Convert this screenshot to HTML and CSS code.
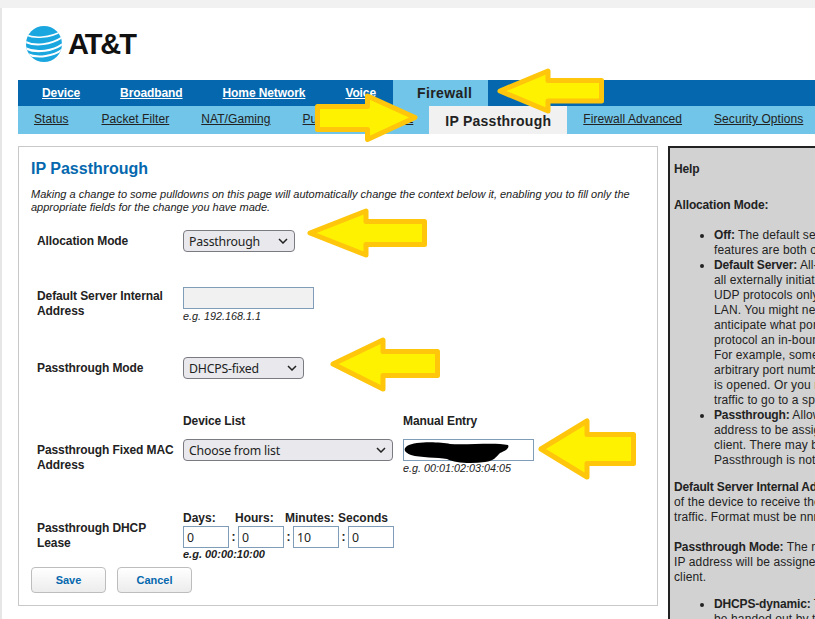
FILE: index.html
```html
<!DOCTYPE html>
<html lang="en">
<head>
<meta charset="utf-8">
<title>IP Passthrough</title>
<link rel="stylesheet" href="styles.css">
</head>
<body>
<div class="page">
  <header class="brand">
    <svg class="globe" width="36" height="36" viewBox="0 0 36 36" aria-hidden="true">
      <defs><clipPath id="ball"><circle cx="18" cy="18" r="18"/></clipPath></defs>
      <circle cx="18" cy="18" r="18" fill="#1aa7e0"/>
      <g clip-path="url(#ball)" fill="none" stroke="#fff" stroke-linecap="round">
        <path d="M-1 8.5C8 13 24 12 36 5" stroke-width="1.6"/>
        <path d="M-2 15C8 21 26 19 38 10" stroke-width="2"/>
        <path d="M-1 22C10 28 28 25 38 17" stroke-width="2.2"/>
        <path d="M1 28C12 33 28 30 37 23" stroke-width="2.2"/>
      </g>
    </svg>
    <span class="wordmark">AT&amp;T</span>
  </header>

  <nav class="nav-main">
    <a href="#">Device</a>
    <a href="#">Broadband</a>
    <a href="#">Home Network</a>
    <a href="#">Voice</a>
    <span class="nav-main-active">Firewall</span>
  </nav>
  <nav class="nav-sub">
    <a href="#">Status</a>
    <a href="#">Packet Filter</a>
    <a href="#">NAT/Gaming</a>
    <a href="#">Public Subnets/DMZ</a>
    <span class="nav-sub-active">IP Passthrough</span>
    <a href="#">Firewall Advanced</a>
    <a href="#">Security Options</a>
  </nav>

  <main class="content">
    <section class="panel">
      <h1 class="title">IP Passthrough</h1>
      <p class="intro">Making a change to some pulldowns on this page will automatically change the context below it, enabling you to fill only the appropriate fields for the change you have made.</p>

      <div class="row row-alloc">
        <div class="label">Allocation Mode</div>
        <select class="sel sel-alloc"><option>Passthrough</option></select>
      </div>

      <div class="row row-server">
        <div class="label">Default Server Internal Address</div>
        <div>
          <input class="txt txt-disabled" type="text" disabled>
          <div class="hint">e.g. 192.168.1.1</div>
        </div>
      </div>

      <div class="row row-mode">
        <div class="label">Passthrough Mode</div>
        <select class="sel sel-mode"><option>DHCPS-fixed</option></select>
      </div>

      <div class="row row-mac">
        <div class="label label-mac">Passthrough Fixed MAC Address</div>
        <div class="mac-col">
          <div class="head">Device List</div>
          <select class="sel sel-device"><option>Choose from list</option></select>
        </div>
        <div class="mac-col">
          <div class="head">Manual Entry</div>
          <input class="txt" type="text">
          <div class="hint">e.g. 00:01:02:03:04:05</div>
        </div>
      </div>

      <div class="row row-lease">
        <div class="label label-lease">Passthrough DHCP Lease</div>
        <div>
          <div class="lease-heads">
            <span class="lh-days">Days:</span><span class="lh-hours">Hours:</span><span class="lh-min">Minutes:</span><span>Seconds</span>
          </div>
          <div class="lease-inputs">
            <input class="txt txt-lease" type="text" value="0"><span class="colon">:</span>
            <input class="txt txt-lease" type="text" value="0"><span class="colon">:</span>
            <input class="txt txt-lease" type="text" value="10"><span class="colon">:</span>
            <input class="txt txt-lease" type="text" value="0">
          </div>
          <div class="hint hint-bold">e.g. 00:00:10:00</div>
        </div>
      </div>

      <div class="actions">
        <button class="btn" type="button">Save</button>
        <button class="btn" type="button">Cancel</button>
      </div>
    </section>

    <aside class="help">
      <p class="help-head"><b>Help</b></p>
      <p><b>Allocation Mode:</b></p>
      <ul>
        <li><b>Off:</b> The default setting. IP Passthrough and Default Server<br>features are both off.</li>
        <li><b>Default Server:</b> All-ports forwarding. The device forwards<br>all externally initiated traffic for the TCP and<br>UDP protocols only to one device on the<br>LAN. You might need this if you cannot<br>anticipate what ports an application needs, or<br>protocol an in-bound connection requires.<br>For example, some applications select an<br>arbitrary port number when a connection<br>is opened. Or you might simply want all<br>traffic to go to a specific device.</li>
        <li><b>Passthrough:</b> Allows the router's public IP<br>address to be assigned to a single LAN<br>client. There may be limitations.<br>Passthrough is not always needed.</li>
      </ul>
      <p><b>Default Server Internal Address:</b> The address<br>of the device to receive the forwarded<br>traffic. Format must be nnn.nnn.nnn.nnn.</p>
      <p><b>Passthrough Mode:</b> The mode by which the public<br>IP address will be assigned to the LAN<br>client.</p>
      <ul class="help-last">
        <li><b>DHCPS-dynamic:</b> The public IP address will<br>be handed out by the DHCP server.</li>
      </ul>
    </aside>
  </main>
</div>

<svg class="marks" width="815" height="619" viewBox="0 0 815 619" aria-hidden="true">
  <path class="scribble" d="M407 446C416 441 440 442 450 444C470 445 495 442 508 445C510 448 505 451 500 453C496 457 494 461 485 462C470 464 455 463 447 459C438 457 420 458 411 455C404 452 403 449 407 446Z"/>
  <g class="arrow">
    <polygon points="500,91 548,71 548,80.5 601.5,80.5 601.5,101 548,101 548,111"/>
    <polygon points="317.5,106.5 367.5,106.5 367.5,96 415,117.5 367.5,139.5 367.5,129.5 317.5,129.5"/>
    <polygon points="310,233 366,211 366,221.5 424.5,221.5 424.5,244.5 366,244.5 366,255"/>
    <polygon points="333,364 383,340 383,351.5 437.5,351.5 437.5,375.5 383,375.5 383,389"/>
    <polygon points="541,449 587,421 587,434.5 633.5,434.5 633.5,463.5 587,463.5 587,477"/>
  </g>
</svg>
</body>
</html>
```
FILE: styles.css
```css
* { box-sizing: border-box; }
html, body { margin: 0; height: 100%; }
body {
  position: relative;
  width: 815px;
  height: 619px;
  overflow: hidden;
  background: #f1f1f1;
  font-family: "Liberation Sans", Arial, sans-serif;
  font-size: 12px;
  color: #222;
}
.page {
  margin-top: 8px;
  height: 611px;
  padding-left: 16px;
  border-left: 2px solid #e6e6e6;
  background: #fff;
  overflow: hidden;
}
.brand {
  display: flex;
  align-items: center;
  height: 72px;
  padding: 0 0 0 8px;
  gap: 6px;
}
.globe { flex: none; }
.wordmark {
  font-size: 29px;
  font-weight: 700;
  letter-spacing: -2.1px;
  color: #111;
}
.nav-main {
  display: flex;
  height: 26px;
  padding-left: 4px;
  background: #0568ae;
  align-items: stretch;
}
.nav-main a {
  display: flex;
  align-items: center;
  padding: 0 20px;
  color: #fff;
  font-weight: 700;
  letter-spacing: -0.1px;
  text-decoration: underline;
}
.nav-main-active {
  display: flex;
  align-items: center;
  margin-left: -3px;
  padding: 0 16px 0 24px;
  background: #71c5e8;
  font-size: 14px;
  letter-spacing: 0.4px;
  font-weight: 700;
  color: #222;
  white-space: nowrap;
}
.nav-sub {
  display: flex;
  height: 28px;
  background: #71c5e8;
}
.nav-sub a {
  display: flex;
  align-items: center;
  padding: 0 16px 2px;
  color: #222;
  letter-spacing: 0.08px;
  text-decoration: underline;
  white-space: nowrap;
}
.nav-sub a:first-child { padding-right: 17px; }
.nav-sub-active {
  display: flex;
  align-items: center;
  padding: 2px 16px 0;
  background: #f1f1f1;
  font-size: 14px;
  letter-spacing: 0.25px;
  font-weight: 700;
  color: #222;
  white-space: nowrap;
}
.content {
  display: flex;
  gap: 10px;
  margin-top: 12px;
}
.panel {
  flex: none;
  width: 640px;
  height: 460px;
  padding: 12px 12px 0 12px;
  border: 1px solid #c8c8c8;
  background: #fff;
}
.title {
  margin: 0;
  font-size: 16px;
  line-height: 20px;
  font-weight: 700;
  color: #0568ae;
}
.intro {
  margin: 9px 0 0;
  font-size: 11px;
  line-height: 13px;
  font-style: italic;
  color: #222;
}
.row { display: flex; align-items: flex-start; padding-left: 6px; }
.label {
  flex: none;
  width: 146px;
  padding-right: 4px;
  font-weight: 700;
  letter-spacing: -0.1px;
  line-height: 15px;
}
.row-alloc { margin-top: 16px; align-items: center; }
.row-server { margin-top: 35px; }
.row-server .label { margin-top: 2px; }
.row-mode { margin-top: 34px; align-items: center; }
.row-mac { margin-top: 35px; }
.label-mac { margin-top: 29px; }
.row-lease { margin-top: 36px; }
.label-lease { margin-top: 10px; }
.sel {
  display: block;
  height: 22px;
  padding: 0 0 0 5px;
  appearance: none;
  -webkit-appearance: none;
  border: 1px solid #7a7a82;
  border-radius: 4px;
  background: #e9e9ed url("data:image/svg+xml,%3Csvg xmlns='http://www.w3.org/2000/svg' width='10' height='6'%3E%3Cpath d='M1 1l4 4 4-4' fill='none' stroke='%23222' stroke-width='1.5'/%3E%3C/svg%3E") no-repeat right 6px center;
  font-family: "Noto Sans", "Open Sans", sans-serif;
  font-size: 12.3px;
  letter-spacing: -0.2px;
  color: #222;
}
.sel-alloc { width: 112px; }
.sel-mode { width: 121px; }
.sel-device { width: 210px; }
.txt {
  display: block;
  width: 131px;
  height: 22px;
  padding: 0 3px;
  border: 1px solid #7f9db9;
  border-radius: 0;
  background: #fff;
  font-family: "Noto Sans", "Open Sans", sans-serif;
  font-size: 12.3px;
  color: #222;
}
.txt-disabled { background: #f1f1f1; }
.hint {
  margin-top: 1px;
  font-size: 10.8px;
  line-height: 13px;
  font-style: italic;
}
.hint-bold { font-size: 11px; font-weight: 700; margin-top: 0; }
.mac-col { margin-right: 10px; }
.head { font-weight: 700; letter-spacing: -0.1px; line-height: 15px; margin-bottom: 10px; }
.lease-heads { display: flex; font-weight: 700; line-height: 15px; }
.lh-days { width: 52px; }
.lh-hours { width: 50px; }
.lh-min { width: 53px; }
.lease-inputs { display: flex; align-items: center; }
.txt-lease { width: 46px; }
.colon { width: 9px; text-align: center; font-weight: 700; }
.actions { display: flex; gap: 11px; margin-top: 6px; }
.btn {
  width: 75px;
  height: 26px;
  padding: 0;
  border: 1px solid #bdbdbd;
  border-radius: 4px;
  background: linear-gradient(#fff, #ececec);
  font-family: "Liberation Sans", Arial, sans-serif;
  font-size: 11px;
  font-weight: 700;
  color: #0568ae;
}
.help {
  flex: none;
  width: 330px;
  height: 480px;
  padding: 14px 0 0 4px;
  border: 2px solid #222;
  border-bottom: 0;
  background: #d2d2d2;
  line-height: 15px;
  white-space: nowrap;
  letter-spacing: 0.12px;
  color: #222;
}
.help b { letter-spacing: -0.15px; }
.help p { margin: 0 0 15px; }
.help-head { margin-bottom: 21px !important; }
.help ul { margin: 14px 0 12px; padding-left: 40px; }
.help ul.help-last { margin-top: -3px; }
.marks {
  position: absolute;
  left: 0;
  top: 0;
  pointer-events: none;
}
.arrow polygon {
  fill: #fff200;
  stroke: #ffc60b;
  stroke-width: 5;
  stroke-linejoin: round;
}
.scribble { fill: #000; }
```
